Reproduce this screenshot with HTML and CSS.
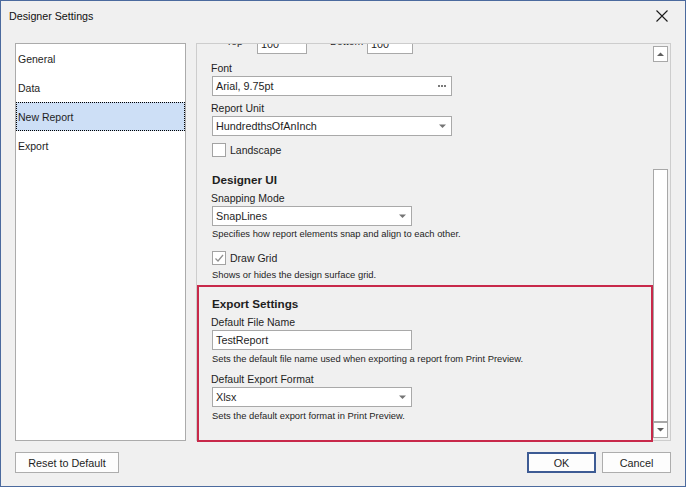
FILE: index.html
```html
<!DOCTYPE html>
<html>
<head>
<meta charset="utf-8">
<title>Designer Settings</title>
<link rel="stylesheet" href="styles.css">
</head>
<body>
<div class="window">
  <div class="titlebar">
    <span class="title">Designer Settings</span>
    <svg class="close" width="12" height="12" viewBox="0 0 12 12"><path d="M0.5 0.5 L11.5 11.5 M11.5 0.5 L0.5 11.5" stroke="#1a1a1a" stroke-width="1.1" fill="none"/></svg>
  </div>
  <div class="main">
    <ul class="nav">
      <li>General</li>
      <li>Data</li>
      <li class="selected">New Report</li>
      <li>Export</li>
    </ul>
    <div class="panel">
      <div class="viewport">
        <div class="content">
          <div class="margins">
            <span class="m-label m-top">Top</span>
            <span class="field w50">100</span>
            <span class="m-label m-bottom">Bottom</span>
            <span class="field w46">100</span>
          </div>
          <div class="label mt6">Font</div>
          <div class="field w240"><span>Arial, 9.75pt</span><svg width="8" height="2" viewBox="0 0 8 2"><rect x="0" y="0" width="2" height="2" fill="#7a7a7a"/><rect x="3" y="0" width="2" height="2" fill="#7a7a7a"/><rect x="6" y="0" width="2" height="2" fill="#7a7a7a"/></svg></div>
          <div class="label mt4">Report Unit</div>
          <div class="field w240"><span>HundredthsOfAnInch</span><svg class="arrow" width="7" height="4" viewBox="0 0 7 4"><path d="M0 0.5h7l-3.5 3.5z" fill="#757575"/></svg></div>
          <div class="check-row mt6"><span class="checkbox"></span><span>Landscape</span></div>
          <div class="section mt14">Designer UI</div>
          <div class="label mt2">Snapping Mode</div>
          <div class="field w200"><span>SnapLines</span><svg class="arrow" width="7" height="4" viewBox="0 0 7 4"><path d="M0 0.5h7l-3.5 3.5z" fill="#757575"/></svg></div>
          <div class="desc mt1">Specifies how report elements snap and align to each other.</div>
          <div class="check-row mt9"><span class="checkbox"><svg width="12" height="12" viewBox="0 0 12 12"><path d="M2.5 6.5 L5 9 L10 3" stroke="#8e8e8e" stroke-width="1.2" fill="none"/></svg></span><span>Draw Grid</span></div>
          <div class="desc mt2">Shows or hides the design surface grid.</div>
          <div class="section mt14">Export Settings</div>
          <div class="label mt2">Default File Name</div>
          <div class="field w200"><span>TestReport</span></div>
          <div class="desc mt2">Sets the default file name used when exporting a report from Print Preview.</div>
          <div class="label mt5">Default Export Format</div>
          <div class="field w200"><span>Xlsx</span><svg class="arrow" width="7" height="4" viewBox="0 0 7 4"><path d="M0 0.5h7l-3.5 3.5z" fill="#757575"/></svg></div>
          <div class="desc mt2">Sets the default export format in Print Preview.</div>
        </div>
      </div>
      <div class="scrollbar">
        <div class="sb-btn"><svg width="7" height="4" viewBox="0 0 7 4"><path d="M0 4h7l-3.5-3.5z" fill="#5f5f5f"/></svg></div>
        <div class="sb-track"><div class="sb-thumb"></div></div>
        <div class="sb-btn"><svg width="7" height="4" viewBox="0 0 7 4"><path d="M0 0h7l-3.5 3.5z" fill="#5f5f5f"/></svg></div>
      </div>
      <div class="highlight"></div>
    </div>
  </div>
  <div class="footer">
    <div class="btn reset">Reset to Default</div>
    <div class="spacer"></div>
    <div class="btn ok">OK</div>
    <div class="btn cancel">Cancel</div>
  </div>
</div>
</body>
</html>
```
FILE: styles.css
```css
* { box-sizing: border-box; }
html, body { margin: 0; padding: 0; }
body {
  width: 686px;
  height: 487px;
  overflow: hidden;
  font-family: "Liberation Sans", Arial, sans-serif;
  color: #1e1e1e;
  background: #f0f0f0;
}
.window {
  width: 686px;
  height: 487px;
  border: 1px solid #4b6a9e;
  background: #f0f0f0;
  display: flex;
  flex-direction: column;
}
.titlebar {
  height: 30px;
  display: flex;
  align-items: center;
  justify-content: space-between;
  padding: 0 17px 0 8px;
  font-size: 10.7px;
  color: #111;
}
.main {
  display: flex;
  margin-top: 12px;
  padding: 0 14px;
  gap: 10px;
  height: 398px;
}
.nav {
  list-style: none;
  margin: 0;
  padding: 0;
  width: 171px;
  flex: none;
  background: #fff;
  border: 1px solid #ababab;
  font-size: 10.5px;
}
.nav li {
  height: 29px;
  line-height: 28px;
  padding-top: 1px;
  padding-left: 2px;
}
.nav li.selected {
  background: #cddff6;
  outline: 1px dotted #000;
  outline-offset: -1px;
}
.panel {
  flex: 1;
  position: relative;
  border: 1px solid #cdcdcd;
  display: flex;
}
.viewport {
  flex: 1;
  overflow: hidden;
}
.content {
  margin-top: -11px;
  padding-left: 14px;
}
.margins {
  display: flex;
  height: 21px;
  align-items: flex-start;
}
.m-label {
  height: 16px;
  line-height: 16px;
  font-size: 10.5px;
}
.m-top { margin-left: 15px; width: 31px; }
.m-bottom { margin-left: 23px; width: 37px; }
.margins .field { margin-top: 1px; margin-left: 0; }
.label {
  height: 16px;
  line-height: 16px;
  font-size: 10.5px;
}
.field {
  margin-left: 1px;
  height: 20px;
  background: #fff;
  border: 1px solid #a9a9a9;
  display: flex;
  align-items: center;
  justify-content: space-between;
  padding: 0 5px 0 3px;
  font-size: 10.8px;
}
.w240 { width: 240px; }
.w200 { width: 200px; }
.w50 { width: 50px; }
.w46 { width: 46px; }
.section {
  margin-left: 1px;
  height: 16px;
  line-height: 16px;
  font-weight: bold;
  font-size: 11.7px;
}
.desc {
  margin-left: 1px;
  height: 14px;
  line-height: 14px;
  font-size: 9.4px;
}
.check-row {
  margin-left: 1px;
  display: flex;
  align-items: center;
  gap: 4px;
  height: 16px;
  font-size: 10.5px;
}
.checkbox {
  width: 14px;
  height: 14px;
  border: 1px solid #a3a3a3;
  background: #fff;
  display: flex;
  align-items: center;
  justify-content: center;
}
.mt1 { margin-top: 1px; }
.mt2 { margin-top: 2px; }
.mt4 { margin-top: 4px; }
.mt5 { margin-top: 5px; }
.mt6 { margin-top: 6px; }
.mt9 { margin-top: 9px; }
.mt14 { margin-top: 14px; }
.scrollbar {
  width: 15px;
  flex: none;
  margin: 2px 2px 2px 0;
  display: flex;
  flex-direction: column;
}
.sb-btn {
  height: 16px;
  background: #fff;
  border: 1px solid #a8a8a8;
  display: flex;
  align-items: center;
  justify-content: center;
}
.sb-track {
  flex: 1;
  display: flex;
  flex-direction: column;
  justify-content: flex-end;
}
.sb-thumb {
  height: 253px;
  background: #fff;
  border: 1px solid #a8a8a8;
}
.highlight {
  position: absolute;
  left: 0;
  top: 241px;
  width: 456px;
  height: 157px;
  border: 2px solid #c8294a;
  pointer-events: none;
}
.footer {
  display: flex;
  margin-top: 11px;
  padding: 0 14px;
}
.spacer { flex: 1; }
.btn {
  height: 21px;
  border: 1px solid #adadad;
  background: #fdfdfd;
  font-size: 10.8px;
  display: flex;
  align-items: center;
  justify-content: center;
}
.reset { width: 104px; }
.ok { width: 69px; border: 2px solid #3d5b94; }
.cancel { width: 69px; margin-left: 6px; }
```
